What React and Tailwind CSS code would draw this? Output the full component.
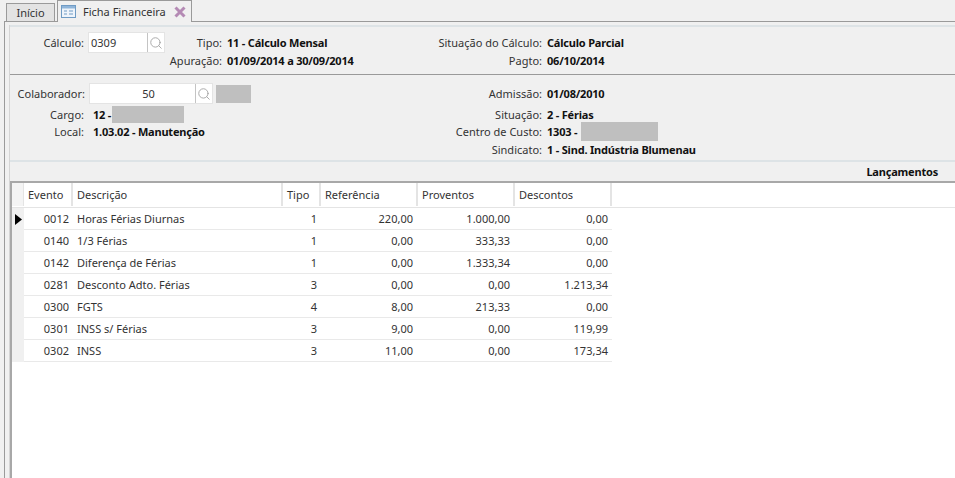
import { Search } from 'lucide-react';

const rows = [
  ['0012', 'Horas Férias Diurnas', '1', '220,00', '1.000,00', '0,00'],
  ['0140', '1/3 Férias', '1', '0,00', '333,33', '0,00'],
  ['0142', 'Diferença de Férias', '1', '0,00', '1.333,34', '0,00'],
  ['0281', 'Desconto Adto. Férias', '3', '0,00', '0,00', '1.213,34'],
  ['0300', 'FGTS', '4', '8,00', '213,33', '0,00'],
  ['0301', 'INSS s/ Férias', '3', '9,00', '0,00', '119,99'],
  ['0302', 'INSS', '3', '11,00', '0,00', '173,34'],
];

const headers = [
  ['Evento', 'w-[49px]'],
  ['Descrição', 'w-[210px]'],
  ['Tipo', 'w-[38px]'],
  ['Referência', 'w-[97px]'],
  ['Proventos', 'w-[97px]'],
  ['Descontos', 'w-[97px]'],
];

function Label({ className, children }) {
  return <span className={`text-right text-[#333] ${className}`}>{children}:</span>;
}

function Value({ className = '', children }) {
  return <b className={`font-bold tracking-[-0.2px] text-[#111] ${className}`}>{children}</b>;
}

function Redacted({ className }) {
  return <span className={`block bg-[#bfbfbf] ${className}`} />;
}

function LookupField({ value, inputClass }) {
  return (
    <div className="flex h-[21px] items-center bg-white border border-[#e4e4e4]">
      <span className={`${inputClass} text-[#333]`}>{value}</span>
      <span className="flex h-full w-[17px] items-center justify-center border-l border-[#c4c4c4]">
        <Search size={14} color="#a0a0a0" strokeWidth={1.5} />
      </span>
    </div>
  );
}

export default function App() {
  return (
    <div className="flex h-[478px] w-[955px] flex-col overflow-hidden bg-[#f0f0f0] font-['Noto_Sans',sans-serif] text-[11px] leading-none">
      {/* Tabs */}
      <div className="flex h-[21px] items-end pl-[6px]">
        <div className="flex h-[18px] w-[49px] items-center justify-center border border-b-0 border-[#9a9a9a] bg-[#e3e3e3] text-[#333]">
          Início
        </div>
        <div className="z-10 -mb-px ml-[2px] flex h-[22px] w-[135px] items-center border border-b-0 border-[#9a9a9a] bg-[#f0f0f0] pl-[3px] text-[#333]">
          <svg width="15" height="13" viewBox="0 0 15 13" className="shrink-0">
            <rect x="0.5" y="0.5" width="14" height="12" fill="#eef4fb" stroke="#6f9bc4" />
            <rect x="1" y="1" width="13" height="2.5" fill="#8fb5da" />
            <path d="M3 6h3M3 9h3M8 6h4M8 9h4" stroke="#6f9bc4" />
          </svg>
          <span className="ml-[7px]">Ficha Financeira</span>
          <svg width="12" height="12" viewBox="0 0 12 12" className="ml-[8px] shrink-0">
            <path d="M1.500 1.500l9 9M10.500 1.500l-9 9" stroke="#b48ab4" strokeWidth="3" />
          </svg>
        </div>
      </div>

      {/* Outer panel */}
      <div className="ml-[4px] flex min-h-0 flex-1 flex-col border-t border-l border-[#9a9a9a] pl-[4px] pt-[3px]">
        <div className="flex min-h-0 flex-1 flex-col border-l border-[#d4d4d4]">
          <div className="h-[2px] bg-[#dde3e6]" />

          {/* Cálculo */}
          <div className="flex h-[48px] flex-col border-b border-[#9a9a9a] pt-[5px]">
            <div className="flex h-[21px] items-center">
              <Label className="w-[74px]">Cálculo</Label>
              <div className="ml-[4px]">
                <LookupField value="0309" inputClass="w-[58px] pl-[2px] text-left" />
              </div>
              <Label className="w-[57px]">Tipo</Label>
              <Value className="ml-[5px] w-[205px]">11 - Cálculo Mensal</Value>
              <Label className="w-[110px]">Situação do Cálculo</Label>
              <Value className="ml-[5px]">Cálculo Parcial</Value>
            </div>
            <div className="mt-[2px] flex items-center">
              <Label className="w-[212px]">Apuração</Label>
              <Value className="ml-[5px] w-[205px]">01/09/2014 a 30/09/2014</Value>
              <Label className="w-[110px]">Pagto</Label>
              <Value className="ml-[5px]">06/10/2014</Value>
            </div>
          </div>

          {/* Colaborador */}
          <div className="flex h-[86px] flex-col border-b border-[#dde3e6] pt-[8px]">
            <div className="flex h-[21px] items-center">
              <Label className="w-[75px]">Colaborador</Label>
              <div className="ml-[4px]">
                <LookupField value="50" inputClass="w-[105px] pl-[12px] text-center" />
              </div>
              <Redacted className="ml-[3px] h-[18px] w-[35px]" />
              <Label className="ml-[207px] w-[84px]">Admissão</Label>
              <Value className="ml-[5px]">01/08/2010</Value>
            </div>
            <div className="mt-[1px] flex h-[18px] items-center">
              <Label className="w-[74px]">Cargo</Label>
              <Value className="ml-[9px] w-[19px]">12 -</Value>
              <Redacted className="h-[17px] w-[72px]" />
              <Label className="ml-[263px] w-[95px]">Situação</Label>
              <Value className="ml-[5px]">2 - Férias</Value>
            </div>
            <div className="flex h-[17px] items-center">
              <Label className="w-[74px]">Local</Label>
              <Value className="ml-[9px] w-[274px]">1.03.02 - Manutenção</Value>
              <Label className="w-[175px]">Centro de Custo</Label>
              <Value className="ml-[5px] w-[34px]">1303 -</Value>
              <Redacted className="h-[19px] w-[77px]" />
            </div>
            <div className="flex h-[18px] items-center">
              <Label className="ml-[357px] w-[175px]">Sindicato</Label>
              <Value className="ml-[5px]">1 - Sind. Indústria Blumenau</Value>
            </div>
          </div>

          {/* Lançamentos */}
          <div className="flex h-[20px] items-center justify-end border-t border-[#dde3e6] pb-px pr-[17px]">
            <Value>Lançamentos</Value>
          </div>

          {/* Table */}
          <div className="flex min-h-0 flex-1 flex-col border-t-2 border-l-2 border-[#a8a8a8] bg-white">
            <div className="flex h-[25px] border-b border-[#e4e4e4] pb-px">
              <div className="w-[12px] shrink-0 bg-[#f4f4f4] border-r border-[#e4e4e4]" />
              {headers.map(([label, width]) => (
                <div
                  key={label}
                  className={`${width} flex shrink-0 items-center border-r-2 border-[#e4e4e4] pl-[4px] text-[#333]`}
                >
                  {label}
                </div>
              ))}
            </div>
            {rows.map((row, i) => (
              <div key={row[0]} className="flex h-[22px] text-[#333]">
                <div className="flex w-[12px] shrink-0 items-center justify-center bg-[#f0f0f0] pl-px">
                  {i === 0 && (
                    <svg width="7" height="11" viewBox="0 0 7 11">
                      <path d="M0 0l7 5.500-7 5.500z" fill="#000" />
                    </svg>
                  )}
                </div>
                <div className="flex border-b border-[#e9e9e9]">
                  <div className="flex w-[49px] items-center justify-end pr-[4px]">{row[0]}</div>
                  <div className="flex w-[210px] items-center pl-[4px]">{row[1]}</div>
                  <div className="flex w-[38px] items-center justify-end pr-[4px]">{row[2]}</div>
                  <div className="flex w-[97px] items-center justify-end pr-[5px]">{row[3]}</div>
                  <div className="flex w-[97px] items-center justify-end pr-[5px]">{row[4]}</div>
                  <div className="flex w-[97px] items-center justify-end pr-[4px]">{row[5]}</div>
                </div>
              </div>
            ))}
          </div>
        </div>
      </div>
    </div>
  );
}
